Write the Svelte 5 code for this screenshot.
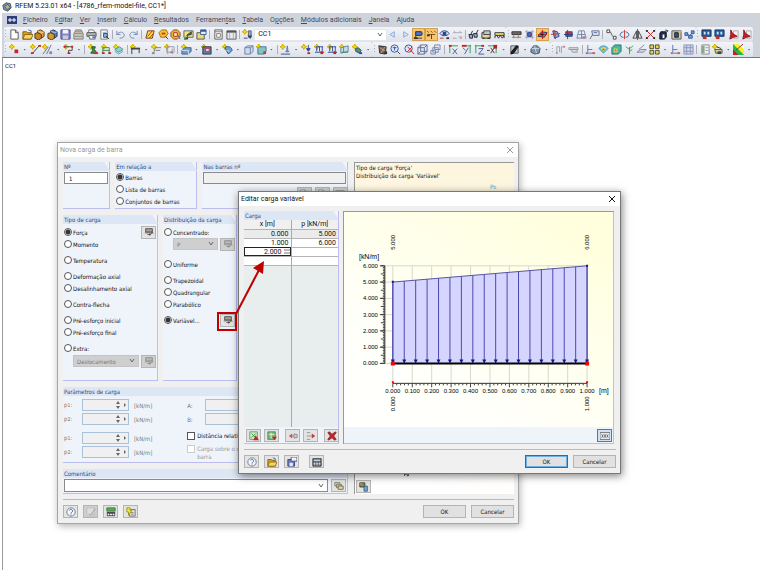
<script lang="ts">
  // each icon is a list of [path, fill, stroke] on a 12x12 grid
  type Part = [string, string, string?];

  const star: Part = ['M3 0l1 2 2 1-2 1-1 2-1-2-2-1 2-1z', '#f4dc1c', '#c9a800'];
  const redDot: Part = ['M7 8h3v3h-3z', '#d01c1c'];

  const icons: Record<string, Part[]> = {
    page: [['M2 1h5l3 3v7h-8z', '#fff', '#555'], ['M7 1v3h3', 'none', '#555']],
    folder: [['M1 3h4l1 1h4v7h-9z', '#d9a520', '#7d5a0c'], ['M3 6h9l-2 5h-9z', '#f6d561', '#8a650d'], ['M7 1l3 1v2', 'none', '#3a62b0']],
    cubeGold: [['M4 2l3-1 4 2v5l-3 2-4-2z', '#e2a23c', '#5b390b'], ['M1 5l3-1 4 2v4l-3 2-4-2z', '#c8842a', '#4d3008'], ['M4 2l4 2 3-1', 'none', '#f8d48a']],
    cubeBlue: [['M4 2l3-1 4 2v5l-3 2-4-2z', '#4f80c6', '#1c3361'], ['M1 5l3-1 4 2v4l-3 2-4-2z', '#d19a35', '#4d3008'], ['M4 2l4 2 3-1', 'none', '#b0cbf0']],
    save: [['M1 1h10v10h-10z', '#8183c4', '#4b4d91'], ['M3 1h6v4h-6z', '#f2f2fa'], ['M3 7h6v4h-6z', '#c9cad6']],
    tray: [['M1 5l2-4h6l2 4v6h-10z', '#cfc8b6', '#777'], ['M3 3h6M2 5h8M2 8h8', 'none', '#888']],
    printer: [['M3 1h5l2 3h-7z', '#fff', '#777'], ['M1 4h10v4h-10z', '#b4b8c4', '#555'], ['M3 7h7v4h-6z', '#eee', '#666'], ['M7 8h3v2h-3z', '#5374b6']],
    preview: [['M2 1h7v10h-7z', '#fff', '#777'], ['M4 3h4v2h-4z', '#9db6da'], ['M5 5h4v4h-4z', '#8fb5e2', '#345'], ['M8 8l3 3', 'none', '#333']],
    undo: [['M2 2v4h4M2 6c3-4 8-3 8 1 0 2-2 3-5 3', 'none', '#7088b4']],
    redo: [['M10 2v4h-4M10 6c-3-4-8-3-8 1 0 2 2 3 5 3', 'none', '#7088b4']],
    book: [['M3 2h7l-2 8h-7z', '#f7e24d', '#7a3413'], ['M3 8l5-6M5 10l4-5', 'none', '#c02a1a']],
    find: [['M1 4l3-3h5l2 4-3 4h-5z', '#f3c332', '#a36a10'], ['M4 4h4v2h-4z', '#c33'], ['M8 8l3 3', 'none', '#333']],
    gear: [['M4 1h4l3 3v4l-3 3h-4l-3-3v-4z', '#e9b43a', '#8c4a14'], ['M4 4h4v4h-4z', '#f7f0c0', '#b52c1c'], ['M9 7l2 4', 'none', '#26a']],
    screenGo: [['M1 2h10v7h-10z', '#f6e37c', '#55617c'], ['M4 7l5-4v3zM1 11h4v-3', '#3a8c3a', '#333']],
    windowNew: [['M1 4h8v7h-8z', '#f3d767', '#555'], ['M5 1h6v5h-6z', '#e8eef8', '#345a9a'], ['M5 1h6v2h-6z', '#345a9a']],
    layout: [['M2 1h8v10h-8z', '#fff', '#555'], ['M2 3h8M4 5h4v4h-4z', 'none', '#777']],
    table: [['M1 2h10v9h-10z', '#e9ebf0', '#555'], ['M1 2h10v2h-10z', '#555'], ['M4 4v7M8 4v7', 'none', '#aaa']],
    loadCase: [star, ['M7 2h3v7h-3z', '#9ab', '#567'], ['M6 7h5l-2 4z', '#346'], ['M2 10h4', 'none', '#346']],
    prev: [['M8 3l-5 3 5 3z', '#dbe5fa', '#8aa5dc']],
    next: [['M4 3l5 3-5 3z', '#dbe5fa', '#8aa5dc']],
    supports: [['M1 10h9M3 10v-7M3 3h5c3 0 3 4 0 4h-5', 'none', '#213a78'], ['M3 3h6v4h-6z', '#4c78c8', '#213a78'], ['M1 9h4v2h-4z', '#333']],
    values: [['M1 2l2 2M5 2l2 2M9 2l2 2M2 6h8', 'none', '#714a10'], ['M6 6v5', 'none', '#213a78'], ['M1 6h3v2h-3z', '#333']],
    eye: [['M1 5c2-4 8-4 10 0-2 3-8 3-10 0z', '#e8eefa', '#1d3b7c'], ['M4 3h4v4h-4z', '#27488f'], ['M8 9h3v2h-3z', '#333'], ['M1 10h4', 'none', '#c22']],
    dims: [['M1 4h10M2 2l2 2M8 2l2 2', 'none', '#a7abb6'], ['M7 8h4v3h-2z', '#c8b3b8'], ['M1 10h4', 'none', '#b8a2a8']],
    glasses: [['M1 6h4v4h-3zM6 5h4v4h-3zM3 6l2-4M9 5l2-4', '#92a9c8', '#223']],
    truck: [['M1 4h9v6h-9z', '#e3d48e', '#333'], ['M3 2h7v4h-7z', '#b9c6d8', '#444'], ['M2 10h2M7 10h3', 'none', '#111']],
    bridge: [['M1 4h10v3h-10z', '#e7dd70', '#333'], ['M1 10v-2l2-1 2 3 2-3 2 3 2-3v3', 'none', '#333']],
    beam: [['M1 3h10v3h-10z', '#6c6c6c', '#333'], ['M1 9h10M3 6v4M8 6v4', 'none', '#9a7a5a']],
    gridDot: [['M1 3h10M1 9h10M3 1v10M9 1v10', 'none', '#a0a7bd'], ['M4 4h4v4h-4z', '#546eb5', '#26397a']],
    nodeSel: [['M1 8l4-5 6 1-3 5z', '#6b8bd0', '#1e2f66'], ['M1 6h10M6 1v10', 'none', '#c02020'], ['M4 5h3v2h-3z', '#222']],
    axesBlue: [['M3 2l5 1 2 5-5 2z', '#90abdc', '#28468e'], ['M1 6l10-1M5 1l1 10', 'none', '#c43030']],
    boxRed: [['M3 3h7v5h-7z', '#d33030', '#27458a'], ['M1 6h10M5 1v10', 'none', '#27458a']],
    grid: [['M3 2h6l2 8h-10zM6 2v8M2 6h8', 'none', '#6f87ae'], ['M7 8h3v2h-3z', '#c66']],
    note: [['M3 2h8v5h-7zM4 6l-3 5', '#e0e5ee', '#5a6c92'], ['M5 4h4', 'none', '#5a6c92']],
    nodes: [['M2 2c5 0 3 7 8 7', 'none', '#555'], ['M1 1h3v3h-3zM8 8h3v3h-3z', '#fff', '#444']],
    rotate: [['M6 1v10', 'none', '#c33'], ['M5 3c-5 1-5 6 0 6M7 3c5 1 5 6 0 6', 'none', '#3665a8']],
    mirror: [['M5 2v8h-4zM7 2v8h4z', '#d9e0ee', '#444'], ['M6 0v12', 'none', '#c22']],
    cross: [['M1 1l10 10M11 1l-10 10', 'none', '#c01c1c'], ['M1 1h2v2h-2zM9 1h2v2h-2zM1 9h2v2h-2zM9 9h2v2h-2z', '#222']],
    info: [['M3 3h6v6l-2 2h-5v-6z', '#222c52', '#111'], ['M5 6h2v4h-2z', '#fff'], ['M8 1l3 1-2 2', '#86a8de', '#345']],
    camera: [['M1 2h10v9h-10z', '#cfcabb', '#555'], ['M4 4h4v5h-4z', '#304f92', '#222'], ['M8 2h3v2h-3z', '#dcbf48']],
    molecule: [['M2 5l4 2 4-3M6 7l1 3', 'none', '#345a9a'], ['M1 4h3v3h-3zM8 2h3v3h-3zM5 7h4v3h-4z', '#7d9bd0', '#345a9a']],
    rsScreen: [['M1 1h10v7h-10z', '#1f5c9c', '#163a66'], ['M3 3h2v3h-2zM7 3h2v3h-2z', '#cfe2f5'], ['M2 8h4v3h-4z', '#c92a2a']],
    pdf: [['M6 2h5v8h-5z', '#f3eef0', '#aaa'], ['M3 1l2 4 5 3-4 1-4 2 1-5z', '#c81e28', '#8e1018']],
    node: [star, ['M6 6h4v4h-4z', '#d21f1f']],
    line: [star, ['M2 11l8-9', 'none', '#333'], ['M1 9h3v2h-3zM9 1h3v2h-3z', '#d21f1f']],
    lineEdit: [star, ['M1 11l6-8M10 1l-5 10', 'none', '#5b6f96'], ['M8 8h3v3h-3z', '#88a']],
    poly: [star, ['M2 3h8v4h-4v3', 'none', '#444'], ['M1 2h2v2h-2zM9 2h2v2h-2zM5 9h3v2h-3z', '#d21f1f']],
    sectionI: [star, ['M4 3h4l-1 3 3 4h-7l2-3z', '#2c9d4c', '#14552a'], ['M6 9h5v2h-5z', '#c32']],
    frame: [star, ['M2 11v-7h7v7M2 7h7', 'none', '#2b8c46'], ['M1 9h3v2h-3zM8 9h3v2h-3z', '#d21f1f']],
    surface: [star, ['M2 6l5-3 4 3-5 3z', '#8fd5c8', '#4a9488'], ['M2 8l4 3 5-3', 'none', '#5a9fc5']],
    hBeam: [star, ['M2 5v6M10 5v5', 'none', '#333'], ['M1 4h10v2h-10z', '#444']],
    hinge: [star, ['M3 9l2-5h6M5 7h5', 'none', '#778'], ['M1 9h3v2h-3z', '#889']],
    stiff: [star, ['M3 3h8v6h-8zM4 1v10M9 5v6', 'none', '#99a'], ['M7 8h2v2h-2z', '#c66']],
    solid: [star, ['M1 7l3-3h7v4l-3 3h-7z', '#6f9ccb', '#3c5f8c'], ['M1 7h7v4', 'none', '#d8e8f6']],
    opening: [star, ['M2 3h9v8h-9z', '#5d7bb0', '#333'], ['M5 5h4v3h-4z', '#e9eefa', '#c33']],
    shell: [star, ['M3 4c4-3 8 0 8 3l-4 4z', '#6f9fd6', '#29508c'], ['M5 7l3 1', 'none', '#d8e8f6']],
    box: [['M2 4l3-2h6v6l-3 3h-6z', '#cddcf0', '#6a7fa6'], ['M2 4h6v7M8 4l3-2', 'none', '#6a7fa6']],
    boxNew: [star, ['M2 5l2-2h7v5l-2 3h-7z', '#86c2c6', '#3f7f8a'], ['M8 8h3v3h-3z', '#c83a2a']],
    lcNew: [star, ['M8 2v7M6 8h4M1 11h10', 'none', '#334f86'], ['M7 4h2v5h-2z', '#6d88b8']],
    nodeLoad: [star, ['M8 1v6M6 5l2 3 2-3z', '#27489a', '#27489a'], ['M7 9h3v2h-3z', '#d21f1f']],
    barLoad: [star, ['M2 3h8M3 3v5M6 3v5M9 3v5M1 9h10', 'none', '#27489a'], redDot],
    areaLoad: [star, ['M2 4l8-2v6l-8 2zM5 3v6', '#c7dcea', '#5d7f96'], ['M3 9h7', 'none', '#3e8a58']],
    freeLoad: [star, ['M4 5l3-1 3 3-2 3-4-2z', '#4f9a58', '#27489a'], ['M8 9h3v2h-3z', '#27489a']],
    view: [['M2 2l8 1-1 8-6-1z', '#77614f', '#2c2c2c'], ['M3 4l6 4M9 3l-5 7', 'none', '#c8a88a'], ['M8 8h3v3h-3z', '#333']],
    zoomIn: [['M1 5a4 4 0 1 0 8 0a4 4 0 1 0-8 0z', '#dfe9fb', '#2c50a8'], ['M3 4h4M5 3v4', 'none', '#2c50a8'], ['M8 8l3 3', 'none', '#444']],
    zoomOut: [['M1 5a4 4 0 1 0 8 0a4 4 0 1 0-8 0z', '#dfe9fb', '#2c50a8'], ['M4 3l7 8M9 3l-5 5', 'none', '#c22']],
    wireBox: [['M1 4l3-3h7v7l-3 3h-7zM1 4h7l3-3M8 4v7M4 1v7l-3 3M4 8h7', 'none', '#5a6b96']],
    copyBox: [['M5 1h6v5h-6zM3 4h6v5h-6zM1 7h5v4h-5z', '#e4e8f2', '#7b88a8']],
    viewX: [['M1 2h10M2 1v9', 'none', '#1f9a58'], ['M5 5l5 6M10 5l-5 6', 'none', '#3f5c98'], ['M1 1h3v2h-3z', '#d02020']],
    viewY: [['M1 2h10M10 1v9', 'none', '#1f9a58'], ['M2 4l3 3M8 4l-4 7', 'none', '#3f5c98'], ['M1 1h5v2h-5z', '#d02020']],
    viewZ: [['M1 2h10M2 1v9', 'none', '#1f9a58'], ['M5 5h5l-5 6h6', 'none', '#3f5c98'], ['M8 1h3v2h-3z', '#d02020']],
    viewNegX: [['M1 2h10M10 1v9', 'none', '#1f9a58'], ['M0 7h3M4 4l4 6M8 4l-4 6', 'none', '#333'], ['M7 1h4v4h-4z', '#c02020']],
    pen: [['M2 2h8v8h-8z', '#c4c8d0', '#555'], ['M2 11l3-1 5-7-2-1-5 6z', '#222', '#111']],
    globe: [['M1 6l3-4h4l3 3-1 5-5 1-4-2z', '#7c92aa', '#44566e'], ['M2 5h8M5 2l2 8', 'none', '#d0d9e4']],
    spring: [['M2 10v-7h3v6M7 10v-7h4', 'none', '#9aa0ae'], ['M1 9h2v2h-2zM9 2h2v2h-2z', '#c88']],
    plate: [['M1 4h10v2h-10zM3 6h7v3h-5z', '#d8dadf', '#999']],
    resultN: [['M3 1v8M1 10h10M3 6h5', 'none', '#5377b8'], ['M8 9h3v2h-3z', '#d0605a'], ['M1 9h2v2h-2z', '#d0605a']],
    iso: [['M1 5c2-4 8-4 10 0l-5 5z', '#5fc9d8', '#5a9ab8'], ['M3 5c2-2 4-2 6 0l-3 3z', '#f0d94b'], ['M5 5h2v2h-2z', '#e2542b']],
    isoBox: [['M1 4l3-3h7v7l-3 3h-7z', '#49b8a0', '#2e6f74'], ['M3 5h4v4h-4z', '#e9e24c'], ['M4 6h2v2h-2z', '#e0572a']],
    plant: [['M6 11v-8M6 6l-4-3M6 5l4-3M6 8l3-2', 'none', '#3f9c4a']],
    slab: [['M1 9l4-3h6l-3 3zM3 6l6-5', '#cfd6e4', '#8089a0']],
    combos: [['M1 1h4v4h-4zM7 1h4v4h-4zM1 7h4v4h-4zM7 7h4v4h-4z', '#ecd43c', '#4a4a3a']],
    numbers: [['M1 1h10v10h-10zM4 1v10M8 1v10M1 4h10M1 8h10', '#cdd5e8', '#8a97b8']],
    printList: [['M2 1h8v10h-8z', '#eceef2', '#888'], ['M2 2h3v8h-3z', '#8aa888'], ['M6 4h3M6 7h3', 'none', '#999']],
    wizard: [star, ['M3 6h8v4h-7z', '#d8cf86', '#555'], ['M5 3l5 2', 'none', '#333'], ['M6 8h4v3h-4z', '#444']],
    palette: [['M0 0h12v12h-12z', '#f6f02a'], ['M0 0l12 12h-12z', '#2ab54c'], ['M6 0h6v6z', '#fff'], ['M0 6l6 6h-6z', '#d41b1b'], ['M3 7l8-7', 'none', '#a01b1b']],
    load: [['M2 2h8v4h-8z', '#a79e96', '#444'], ['M1 7h9M4 9h4l2-3 1 2', '#eab890', '#555'], ['M6 8h2l-1 3z', '#333']],
    help: [['M1 6a5 5 0 1 0 10 0a5 5 0 1 0-10 0z', '#f4f6fa', '#666f80'], ['M4 4c1-2 4-1 4 1 0 1-2 1-2 3M6 9v1', 'none', '#2b56a6']],
    edit: [['M1 1h9v10h-9z', '#eee', '#aaa'], ['M3 8l2 2 6-8', 'none', '#555'], ['M7 7h4v4h-4z', '#bcbcbc']],
    units: [['M1 1h10v4h-10z', '#5fa55b', '#397a36'], ['M1 6h10v5h-10z', '#454b56'], ['M2 8h2v2h-2zM5 8h2v2h-2zM8 8h2v2h-2z', '#fff']],
    calcBolt: [['M4 3h7v8h-7z', '#ddd', '#666'], ['M6 6h3v1h-3zM6 8h3v1h-3z', '#777'], ['M1 1h4v3h2l-4 6v-4h-2z', '#f2ea26', '#98901a']],
    copies: [['M1 2h6v4h-6z', '#d8d8b0', '#776'], ['M3 4h6v4h-6z', '#cbc38d', '#776'], ['M5 6h6v4h-6z', '#e0d593', '#665']],
    imageGo: [['M1 1h6v5h-6z', '#5ba24f', '#333'], ['M1 1h3v3h-3z', '#d77a35'], ['M6 5h4v6h-4z', '#7ba6d8', '#357']],
    excelIn: [['M1 1h9v9h-9z', '#d3ead3', '#4a9a50'], ['M3 3l5 5M8 3l-5 5', 'none', '#2c8a36'], ['M8 5l4 6h-7z', '#d02020']],
    excelOut: [['M1 1h9v9h-9z', '#7dbb7a', '#3e8a44'], ['M2 4h7M5 2v7', 'none', '#e8f4e8'], ['M6 7h6l-3 4z', '#d02020']],
    rowIn: [['M4 6h7M8 3v6', 'none', '#888'], ['M1 6l4-3v6z', '#c55'], ['M7 4h4v4h-4z', '#ccc', '#888']],
    rowOut: [['M1 2h4M1 6h9M1 10h4', 'none', '#888'], ['M7 3l4 3-4 3z', '#c43c3c']],
    clear: [['M1 2l2-1 3 3 4-3 1 1-3 4 3 4-2 1-3-3-4 3-1-1 3-4z', '#cf2026', '#7d2a2c']],
    floppy: [['M1 3h8v8h-8z', '#6b7cc0', '#2c3a78'], ['M3 7h4v4h-4z', '#e8e8f4'], ['M5 0h7v5h-7z', '#f2f2fa', '#446']],
    calc: [['M1 2h10v9h-10z', '#566070', '#333'], ['M2 3h8v2h-8z', '#c4ccd8'], ['M2 7h2v1h-2zM5 7h2v1h-2zM8 7h2v1h-2zM2 9h2v1h-2zM5 9h2v1h-2zM8 9h2v1h-2z', '#fff']],
    xx: [['M0 2h12v8h-12z', '#fff', '#555'], ['M2 4l2 4M4 4l-2 4M5 4l2 4M7 4l-2 4M8 4l2 4M10 4l-2 4', 'none', '#555']]
  };

  // '|' separator, ':' grip, 'v' drop-down arrow, '*' prefix for a pressed button
  const rowOne = [
    { size: 500, items: ': page folder cubeGold cubeBlue save tray printer preview | undo redo | book find gear screenGo windowNew | layout table | loadCase COMBO prev next *supports *values eye dims | glasses truck bridge' },
    { size: 189, items: ': beam gridDot *nodeSel axesBlue boxRed grid note | nodes rotate mirror cross info camera molecule' },
    { size: 57, items: ': rsScreen rsScreen pdf pdf' }
  ];
  const rowTwo = [
    { size: 367, items: ': node v line lineEdit v poly v | sectionI frame surface | hBeam v hinge stiff | solid v opening v shell v box boxNew v | lcNew v nodeLoad barLoad barLoad areaLoad freeLoad v' },
    { size: 178, items: ': view zoomIn zoomOut wireBox copyBox | viewX viewY viewZ viewNegX v pen v globe v' },
    { size: 202, items: ': spring plate | resultN iso isoBox plant slab combos v resultN numbers | printList wizard v palette v' }
  ];

  // menu captions, & marks the access key
  const menus = [
    '&Ficheiro', 'E&ditar', '&Ver', '&Inserir', '&Cálculo', '&Resultados', 'Ferramen&tas',
    '&Tabela', 'O&pções', '&Módulos adicionais', '&Janela', 'A&juda'
  ];

  const relations = ['Barras', 'Lista de barras', 'Conjuntos de barras'];
  const loadTypes = [
    ['Força', 'Momento'], ['Temperatura'], ['Deformação axial', 'Desalinhamento axial'],
    ['Contra-flecha'], ['Pré-esforço inicial', 'Pré-esforço final'], ['Extra:']
  ];
  const distributions = [['Uniforme'], ['Trapezoidal', 'Quadrangular', 'Parabólico']];

  let barNo = $state('1');
  let relation = $state('Barras');
  let loadType = $state('Força');
  let distribution = $state('Variável...');
  let relative = $state(false);
  let comment = $state('');
  let newX = $state('2.000');

  const points = [
    { x: 0, p: 5 },
    { x: 1, p: 6 }
  ];

  const px = (x: number) => 49 + x * 195;
  const py = (p: number) => 152 - (p * 98) / 6;
  const at = (x: number) => points[0].p + x * (points[1].p - points[0].p);
  const range = (n: number) => Array.from({ length: n }, (_, i) => i);
</script>

{#snippet icon(name: string)}
  <svg class="icon" viewBox="0 0 12 12" aria-hidden="true">
    {#each icons[name] as [d, fill, stroke]}
      <path {d} {fill} stroke={stroke ?? 'none'} />
    {/each}
  </svg>
{/snippet}

{#snippet toolbar(items: string)}
  {#each items.split(' ') as item}
    {#if item === '|'}
      <span class="sep"></span>
    {:else if item === ':'}
      <span class="grip"></span>
    {:else if item === 'v'}
      <button class="more" aria-label="Mais"></button>
    {:else if item === 'COMBO'}
      <select class="case" aria-label="Caso de carga"><option>CC1</option></select>
    {:else}
      <button class="tool" class:pressed={item[0] === '*'} aria-label={item.replace('*', '')}>
        {@render icon(item.replace('*', ''))}
      </button>
    {/if}
  {/each}
{/snippet}

{#snippet iconButton(name: string, label: string, disabled = false)}
  <button class="icon-btn" aria-label={label} {disabled}>{@render icon(name)}</button>
{/snippet}

{#snippet spin(label: string)}
  <label class="spin-label">
    <span>p<small>{label}</small>:</span>
    <span class="spin">
      <input disabled />
      <svg viewBox="0 0 14 10" aria-hidden="true">
        <path d="M2 4l2-3 2 3zM2 6l2 3 2-3z" fill="#666" />
        <path d="M10 3v4l2-2z" fill="#666" />
      </svg>
    </span>
    <span>[kN/m]</span>
  </label>
{/snippet}

<div class="app">
  <header class="title">
    <svg class="logo" viewBox="0 0 12 12" aria-hidden="true">
      <path d="M1 4l4-3 5 1 1 5-4 4-5-2z" fill="#7d97b2" stroke="#33475c" />
      <path d="M3 5l4-2 3 4-4 2z" fill="#d5b05a" stroke="#2f5f90" />
    </svg>
    <span>RFEM 5.23.01 x64 - [4786_rfem-model-file, CC1*]</span>
  </header>

  <nav class="menu">
    <svg class="flag" viewBox="0 0 10 8" aria-hidden="true">
      <path d="M0 0h10v8h-10z" fill="#2a3c7c" />
      <path d="M1 4h8M3 2v4M7 2v4" stroke="#fff" />
    </svg>
    {#each menus as caption}
      {@const [before, after] = caption.split('&')}
      <button>{before}<u>{after[0]}</u>{after.slice(1)}</button>
    {/each}
  </nav>

  {#each [rowOne, rowTwo] as row}
    <div class="bars">
      {#each row as bar}
        <div class="bar" style="flex-grow: {bar.size}">{@render toolbar(bar.items)}</div>
      {/each}
    </div>
  {/each}

  <main class="desk">
    <p>CC1</p>
  </main>

  <section class="window load">
    <header>
      <h2>Nova carga de barra</h2>
      <button class="close" aria-label="Fechar">
        <svg viewBox="0 0 8 8"><path d="M1 1l6 6M7 1l-6 6" /></svg>
      </button>
    </header>

    <div class="load-body">
      <div class="left">
        <div class="row-top">
          <fieldset class="group">
            <legend>Nº</legend>
            <input class="text" aria-label="Nº" bind:value={barNo} />
          </fieldset>
          <fieldset class="group">
            <legend>Em relação a</legend>
            {#each relations as name}
              <label class="radio"><input type="radio" value={name} bind:group={relation} />{name}</label>
            {/each}
          </fieldset>
          <fieldset class="group">
            <legend>Nas barras nº</legend>
            <input class="text" aria-label="Nas barras nº" disabled />
            <div class="picks">
              {@render iconButton('page', 'Nova barra', true)}
              {@render iconButton('page', 'Lista', true)}
              {@render iconButton('table', 'Selecionar', true)}
            </div>
          </fieldset>
        </div>

        <div class="row-mid">
          <fieldset class="group">
            <legend>Tipo de carga</legend>
            <div class="stack">
              {#each loadTypes as block}
                <div>
                  {#each block as name}
                    <div class="line">
                      <label class="radio"><input type="radio" value={name} bind:group={loadType} />{name}</label>
                      {#if name === 'Força'}
                        {@render iconButton('load', 'Editar força')}
                      {/if}
                    </div>
                  {/each}
                </div>
              {/each}
            </div>
            <div class="line nested">
              <select disabled aria-label="Extra"><option>Deslocamento</option></select>
              {@render iconButton('load', 'Editar extra', true)}
            </div>
          </fieldset>
          <fieldset class="group">
            <legend>Distribuição da carga</legend>
            <div class="stack">
              <div>
                <label class="radio"><input type="radio" value="Concentrado:" bind:group={distribution} />Concentrado:</label>
                <div class="line nested single">
                  <select disabled aria-label="Concentrado"><option>P</option></select>
                  {@render iconButton('load', 'Editar concentrado', true)}
                </div>
              </div>
              {#each distributions as block}
                <div>
                  {#each block as name}
                    <label class="radio"><input type="radio" value={name} bind:group={distribution} />{name}</label>
                  {/each}
                </div>
              {/each}
              <div class="line">
                <label class="radio"><input type="radio" value="Variável..." bind:group={distribution} />Variável...</label>
                {@render iconButton('load', 'Editar carga variável')}
              </div>
            </div>
          </fieldset>
        </div>

        <fieldset class="group params">
          <legend>Parâmetros de carga</legend>
          <div class="param-grid">
            <div class="spins">
              <div>{@render spin('1')}{@render spin('2')}</div>
              <div>{@render spin('1')}{@render spin('2')}</div>
            </div>
            <div class="spins">
              <div>
                {#each ['A:', 'B:'] as name}
                  <label class="dist"><span>{name}</span><input disabled /></label>
                {/each}
              </div>
              <div>
                <label class="check"><input type="checkbox" bind:checked={relative} /><span>Distância relativa</span></label>
                <label class="check off"><input type="checkbox" disabled /><span>Carga sobre o comp.<br />barra</span></label>
              </div>
            </div>
          </div>
        </fieldset>

        <fieldset class="group">
          <legend>Comentário</legend>
          <div class="comment">
            <select aria-label="Comentário" bind:value={comment}><option value=""></option></select>
            {@render iconButton('copies', 'Comentários guardados')}
          </div>
        </fieldset>
      </div>

      <div class="info">
        <p>Tipo de carga 'Força'<br />Distribuição da carga 'Variável'</p>
        <span class="mark">P<small>b</small></span>
        <div class="info-foot">
          {@render iconButton('imageGo', 'Imagem')}
          <svg viewBox="0 0 6 4" aria-hidden="true"><path d="M0 3l1-2h4M3 3l2-1" fill="none" stroke="#333" /></svg>
        </div>
      </div>
    </div>

    <footer>
      {@render iconButton('help', 'Ajuda')}
      {@render iconButton('edit', 'Editar', true)}
      {@render iconButton('units', 'Unidades')}
      {@render iconButton('calcBolt', 'Calcular')}
      <span class="fill"></span>
      <button class="push">OK</button>
      <button class="push">Cancelar</button>
    </footer>
  </section>

  <section class="window variable">
    <header>
      <h2>Editar carga variável</h2>
      <button class="close" aria-label="Fechar">
        <svg viewBox="0 0 8 8"><path d="M1 1l6 6M7 1l-6 6" /></svg>
      </button>
    </header>

    <div class="variable-body">
      <div class="group values">
        <h3>Carga</h3>
        <div class="sheet">
          <table>
            <thead>
              <tr><th>x [m]</th><th>p [kN/m]</th></tr>
            </thead>
            <tbody>
              {#each points as point, i}
                <tr class:first={i === 0}>
                  <td>{point.x.toFixed(3)}</td>
                  <td>{point.p.toFixed(3)}</td>
                </tr>
              {/each}
              <tr>
                <td class="active">
                  <input aria-label="x [m]" bind:value={newX} />
                  <svg viewBox="0 0 6 7" aria-hidden="true"><path d="M0 2h6M0 5h6" stroke="#777" /></svg>
                </td>
                <td></td>
              </tr>
              <tr><td></td><td></td></tr>
              <tr class="rest"><td></td><td></td></tr>
            </tbody>
          </table>
        </div>
        <div class="strip">
          {@render iconButton('excelIn', 'Importar')}
          {@render iconButton('excelOut', 'Exportar')}
          <span class="gap"></span>
          {@render iconButton('rowIn', 'Inserir linha')}
          {@render iconButton('rowOut', 'Eliminar linha')}
          <span class="gap"></span>
          {@render iconButton('clear', 'Limpar')}
        </div>
      </div>

      <div class="plot">
        <svg class="chart" viewBox="0 0 270 216" role="img" aria-label="Carga variável">
          {#each range(11) as i}
            <path class="gridline" d="M{px(i / 10)} 54V172" />
          {/each}
          {#each range(7) as i}
            <path class="gridline" d="M41 {py(i)}H244" />
            <path class="axis" d="M36 {py(i)}h5" />
            <text x="34" y={py(i) + 2} text-anchor="end">{i}.000</text>
          {/each}
          {#each range(61) as i}
            <path class="tick" d="M{i % 5 ? 39 : 37} {py(i / 10)}H41" />
          {/each}
          <path class="axis" d="M41 54V152" />

          <path class="area" d="M{px(0)} {py(0)}V{py(at(0))}L{px(1)} {py(at(1))}V{py(0)}z" />
          {#each range(18) as i}
            <path class="arrow" d="M{px(i / 17)} {py(at(i / 17))}V150" />
            <path class="head" d="M{px(i / 17) - 2} 148h4l-2 4z" />
          {/each}
          <path class="base" d="M{px(0)} 152H{px(1)}" />
          <path class="head" d="M48 69h2v2h-2zM243 53h2v2h-2z" />
          <path class="end" d="M47 150h4v4h-4zM242 150h4v4h-4zM48 170h2v2h-2zM243 170h2v2h-2z" />

          <path class="axis" d="M{px(0)} 172H{px(1)}" />
          {#each range(51) as i}
            <path class="tick" d="M{px(i / 50)} 172v{i % 5 ? 2 : 4}" />
          {/each}
          {#each range(11) as i}
            <text x={px(i / 10)} y="182" text-anchor="middle">{(i / 10).toFixed(3)}</text>
          {/each}
          <text class="unit" x="15" y="47">[kN/m]</text>
          <text class="unit" x="256" y="182">[m]</text>
          {#each points as point}
            <text transform="translate({px(point.x) + 2} 38) rotate(-90)">{point.p.toFixed(3)}</text>
            <text transform="translate({px(point.x) + 2} 200) rotate(-90)">{point.x.toFixed(3)}</text>
          {/each}
        </svg>
        <div class="strip end-strip">{@render iconButton('xx', 'Valores')}</div>
      </div>
    </div>

    <footer>
      {@render iconButton('help', 'Ajuda')}
      {@render iconButton('folder', 'Abrir')}
      {@render iconButton('floppy', 'Guardar')}
      <span class="narrow"></span>
      {@render iconButton('calc', 'Calculadora')}
      <span class="fill"></span>
      <button class="push default">OK</button>
      <button class="push">Cancelar</button>
    </footer>
  </section>

  <svg class="callout" viewBox="0 0 50 72" aria-hidden="true">
    <path d="M1 53h18v17h-18z" fill="none" stroke="#c00000" stroke-width="2" />
    <path d="M19 54L42 10" stroke="#c00000" stroke-width="2" />
    <path d="M47 1l-1 13-10-6z" fill="#c00000" />
  </svg>
</div>

<style>
  :global(body) {
    background: #fff;
  }

  .app {
    position: relative;
    display: flex;
    flex-direction: column;
    min-height: 100vh;
    overflow: hidden;
    font-family: Roboto, 'Noto Sans', sans-serif;
    font-size: 7px;
    line-height: 9px;
    color: #111;
  }

  .app * {
    box-sizing: border-box;
  }

  button, input, select {
    font: inherit;
    color: inherit;
    margin: 0;
    padding: 0;
    border-radius: 0;
    outline: none;
  }

  h2, h3, p {
    margin: 0;
    font-size: inherit;
    font-weight: 400;
  }

  .icon {
    display: block;
    flex: none;
    width: 12px;
    height: 12px;
  }

  .title {
    display: flex;
    align-items: center;
    gap: 3px;
    height: 13px;
    padding-left: 2px;
  }

  .logo {
    width: 10px;
    height: 10px;
  }

  .menu {
    display: flex;
    align-items: center;
    gap: 7px;
    height: 14px;
    margin-left: 2px;
    padding-left: 5px;
    background: #cfd3dc;
    color: #444a58;
  }

  .menu button {
    border: 0;
    background: none;
    white-space: nowrap;
  }

  .flag {
    width: 10px;
    height: 8px;
    margin-right: -1px;
  }

  .bars {
    display: flex;
    height: 15px;
    margin-left: 2px;
    padding: 0 7px 0 2px;
    background: #cfd3dc;
  }

  .bar {
    display: flex;
    flex-basis: 0;
    align-items: center;
    min-width: 0;
    border-radius: 2px;
    background: linear-gradient(#f2f4f8, #dde1ea);
  }

  .tool, .more {
    display: flex;
    flex: 13 1 0;
    align-items: center;
    justify-content: center;
    min-width: 0;
    height: 13px;
    padding: 0;
    border: 0;
    background: none;
  }

  .tool .icon {
    width: 11px;
    height: 11px;
  }

  .more {
    flex-grow: 8;
  }

  .more::after {
    content: '';
    width: 3px;
    height: 2px;
    background: #666;
    clip-path: polygon(0 0, 100% 0, 50% 100%);
  }

  .pressed {
    background: #fbc56c;
    box-shadow: inset 0 0 0 1px #d2a252;
  }

  .sep, .grip {
    flex: 4 1 0;
    height: 9px;
    background: linear-gradient(#a9afbc, #a9afbc) center / 1px 100% no-repeat;
  }

  .grip {
    background: repeating-linear-gradient(#a9afbc 0 1px, transparent 1px 3px) center / 1px 100% no-repeat;
  }

  select {
    appearance: none;
    padding: 0 3px;
    border: 1px solid #8a8a8a;
    background: #fff url("data:image/svg+xml,%3Csvg xmlns='http://www.w3.org/2000/svg' width='6' height='4'%3E%3Cpath d='M1 0l2 3 2-3' fill='none' stroke='%23666'/%3E%3C/svg%3E") right 3px center no-repeat;
  }

  .case {
    flex: 126 1 0;
    min-width: 0;
    height: 12px;
    border-color: #e4e7ee;
  }

  .desk {
    flex: 1;
    margin-left: 2px;
    padding: 3px 2px;
    border-top: 1px solid #777;
    border-left: 1px solid #999;
    font-size: 6px;
  }

  .window {
    position: absolute;
    display: flex;
    flex-direction: column;
    border: 1px solid #a5a5a5;
    background: #f0f0f0;
    box-shadow: 1px 2px 7px rgba(0, 0, 0, 0.3);
    font-family: 'DejaVu Sans Condensed', 'DejaVu Sans', sans-serif;
    font-size: 6px;
  }

  .load {
    left: 57px;
    top: 142px;
    width: 462px;
  }

  .variable {
    left: 238px;
    top: 191px;
    width: 383px;
    border-color: #777;
    box-shadow: 1px 2px 8px rgba(0, 0, 0, 0.5);
  }

  .window > header {
    display: flex;
    align-items: center;
    justify-content: space-between;
    height: 14px;
    padding: 0 4px 0 2px;
    background: #fff;
    font-family: Roboto, 'Noto Sans', sans-serif;
    font-size: 7px;
  }

  .load > header {
    color: #999;
  }

  .close {
    width: 8px;
    height: 8px;
    border: 0;
    background: none;
  }

  .close svg {
    display: block;
    fill: none;
    stroke: currentColor;
  }

  .window > footer {
    display: flex;
    align-items: center;
    gap: 5px;
    height: 24px;
    margin: 5px 4px 0 5px;
    border-top: 1px solid #bbb;
  }

  .fill {
    flex: 1;
  }

  .icon-btn {
    display: flex;
    flex: none;
    align-items: center;
    justify-content: center;
    width: 15px;
    height: 13px;
    border: 1px solid #b4b4b4;
    background: #e3e3e3;
  }

  .icon-btn .icon {
    width: 10px;
    height: 10px;
  }

  .icon-btn:disabled {
    background: #cfcfcf;
  }

  .icon-btn:disabled .icon {
    opacity: 0.5;
    filter: grayscale(1);
  }

  .push {
    width: 43px;
    height: 13px;
    border: 1px solid #b4b4b4;
    background: #e1e1e1;
  }

  .default {
    border-color: #0078d7;
    box-shadow: inset 0 0 0 1px #6db0e6;
  }

  .load-body {
    display: grid;
    grid-template-columns: 285fr 160fr;
    gap: 6px;
    padding: 5px 4px 0 5px;
  }

  .left {
    display: flex;
    flex-direction: column;
    gap: 6px;
    min-width: 0;
  }

  .group {
    display: flow-root;
    min-width: 0;
    margin: 0;
    padding: 0;
    border: 0;
    background: #eff3fa;
    box-shadow: inset -1px -1px #bcbcf0;
  }

  legend, h3 {
    float: left;
    width: 100%;
    height: 9px;
    padding: 0 1px;
    background: #dce6f5;
    clip-path: polygon(0 0, calc(100% - 6px) 0, 100% 100%, 0 100%);
    color: #1f4a7c;
    line-height: 9px;
    white-space: nowrap;
  }

  legend + * {
    clear: both;
  }

  .row-top {
    display: grid;
    grid-template-columns: 47fr 82fr 145fr;
    gap: 5px;
    height: 47px;
  }

  .row-mid {
    display: grid;
    grid-template-columns: 95fr 74fr 106fr;
    gap: 5px;
    height: 166px;
  }

  .text {
    width: calc(100% - 3px);
    height: 12px;
    margin: 1px;
    padding: 0 4px;
    border: 1px solid #8a8a8a;
    background: #fff;
  }

  .text:disabled {
    background: #f0f0f0;
  }

  .picks {
    display: flex;
    justify-content: flex-end;
    gap: 3px;
    margin-top: 2px;
  }

  .radio {
    display: flex;
    align-items: center;
    gap: 1px;
    height: 12px;
    padding-left: 1px;
    white-space: nowrap;
  }

  .radio input {
    appearance: none;
    width: 8px;
    height: 8px;
    border: 1px solid #555;
    border-radius: 50%;
    background: #fff;
  }

  .radio input:checked {
    background: radial-gradient(circle, #333 0 2px, #fff 3px);
  }

  .stack {
    display: flex;
    flex-direction: column;
    gap: 4px;
    padding-top: 2px;
  }

  .line {
    display: flex;
    align-items: center;
    justify-content: space-between;
    height: 12px;
    padding-right: 2px;
  }

  .nested {
    gap: 2px;
    margin-top: 1px;
    padding-left: 10px;
  }

  .single {
    margin: 0 0 4px;
  }

  .nested select {
    flex: 1;
    min-width: 0;
    height: 12px;
    border-color: #c4c4c4;
    background-color: #cfcfcf;
    color: #777;
    opacity: 1;
  }

  .params {
    height: 76px;
  }

  .param-grid {
    display: grid;
    grid-template-columns: 124fr 161fr;
    padding: 2px 1px;
    color: #777;
  }

  .spins {
    display: flex;
    flex-direction: column;
    gap: 5px;
  }

  .spin-label, .dist {
    display: grid;
    grid-template-columns: 18px 47px auto;
    align-items: center;
    height: 14px;
  }

  .spin-label > span:last-child {
    padding-left: 5px;
  }

  small {
    font-size: 5px;
  }

  .spin {
    display: flex;
    height: 12px;
    border: 1px solid #a9c2da;
    background: #f0f0f0;
  }

  .spin input {
    flex: 1;
    min-width: 0;
    border: 0;
    background: none;
  }

  .spin svg {
    width: 14px;
    height: 10px;
  }

  .dist {
    grid-template-columns: 18px 1fr;
  }

  .dist input {
    height: 12px;
    border: 1px solid #a9c2da;
    background: #f0f0f0;
  }

  .check {
    display: flex;
    gap: 2px;
    height: 13px;
    padding-top: 1px;
    color: #111;
    line-height: 8px;
    white-space: nowrap;
  }

  .off {
    color: #999;
  }

  .check input {
    appearance: none;
    flex: none;
    width: 8px;
    height: 8px;
    border: 1px solid #555;
    background: #fff;
  }

  .check input:disabled {
    border-color: #ccc;
  }

  .comment {
    display: flex;
    gap: 3px;
    padding: 1px 2px 2px 1px;
  }

  .comment select {
    flex: 1;
    height: 13px;
  }

  .info {
    display: flex;
    flex-direction: column;
    padding: 1px 2px 1px 1px;
    border-top: 1px solid #999;
    border-left: 1px solid #999;
    background: linear-gradient(20deg, #fff 10%, #fff8e4 70%, #fdf5dc);
  }

  .info p {
    line-height: 8px;
  }

  .mark {
    align-self: flex-end;
    margin: 2px 16px auto 0;
    color: #2aa5c8;
  }

  .info-foot {
    display: flex;
    align-items: flex-end;
    gap: 33px;
    height: 20px;
  }

  .info-foot > svg {
    align-self: flex-start;
    width: 6px;
    height: 4px;
  }

  .variable-body {
    display: grid;
    grid-template-columns: 95fr 271fr;
    gap: 4px;
    padding: 5px 6px 0 5px;
  }

  .values {
    display: flex;
    flex-direction: column;
  }

  .sheet {
    flex: 1;
    display: flex;
    margin-right: 1px;
    background: #e8eeee;
  }

  table {
    width: 100%;
    border-collapse: collapse;
    table-layout: fixed;
    font-family: Roboto, 'Noto Sans', sans-serif;
    font-size: 7px;
    line-height: 8px;
  }

  th, td {
    height: 9px;
    padding: 0 2px;
    border-right: 1px solid #aaa;
    border-bottom: 1px solid #b4b4b4;
    background: #fff;
    font-weight: 400;
    text-align: right;
  }

  th:last-child, td:last-child {
    border-right: 0;
  }

  th {
    background: #f0f0f0;
    text-align: center;
  }

  .first td {
    background: #ebebeb;
  }

  .rest td {
    height: auto;
    border-bottom: 0;
    background: #e8eeee;
  }

  td.active {
    padding: 0 1px;
    outline: 1px solid #222;
    outline-offset: -1px;
  }

  .active input {
    float: left;
    width: calc(100% - 8px);
    height: 8px;
    border: 0;
    background: none;
    text-align: right;
  }

  .active svg {
    display: block;
    width: 6px;
    height: 7px;
    margin-left: auto;
  }

  .strip {
    display: flex;
    align-items: center;
    gap: 3px;
    height: 17px;
    padding: 0 2px;
  }

  .gap {
    flex: 1;
  }

  .narrow {
    width: 0;
  }

  .end-strip {
    justify-content: flex-end;
  }

  .end-strip .icon-btn {
    border-color: #3f7fb4;
    background: #cfe3f4;
  }

  .plot {
    border-left: 1px solid #999;
    border-top: 1px solid #999;
    background: #eff3fa;
    box-shadow: inset -1px -1px #bcbcf0;
  }

  .chart {
    display: block;
    width: calc(100% - 1px);
    background: linear-gradient(30deg, #fff, #fffffa 30%, #ffffde 90%);
    font-family: 'Liberation Sans', Arial, sans-serif;
    font-size: 6px;
  }

  .chart path {
    fill: none;
  }

  .chart .gridline {
    stroke: #d8d8cc;
  }

  .chart .axis {
    stroke: #333;
  }

  .chart .tick {
    stroke: #444;
  }

  .chart .area {
    fill: #d5d5ff;
    stroke: #5555a8;
  }

  .chart .arrow {
    stroke: #4a4ab0;
  }

  .chart .head {
    fill: #14148c;
  }

  .chart .base {
    stroke: #000;
    stroke-width: 2px;
  }

  .chart .end {
    fill: #f00;
  }

  .unit {
    font-size: 7px;
  }

  .callout {
    position: absolute;
    left: 217px;
    top: 260px;
    width: 50px;
    height: 72px;
    pointer-events: none;
  }
</style>
